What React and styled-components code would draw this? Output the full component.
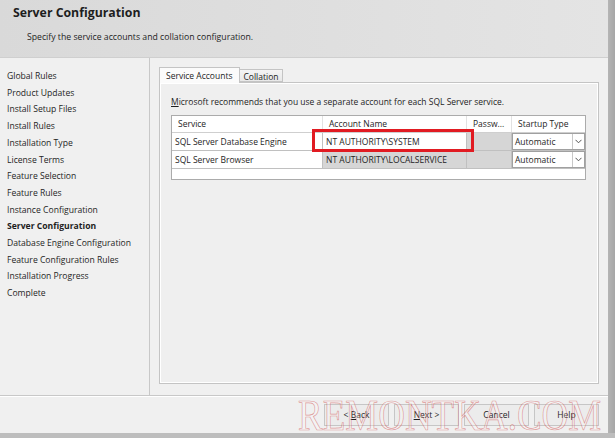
import * as React from 'react'
import styled, { createGlobalStyle } from 'styled-components'

const steps = [
  'Global Rules',
  'Product Updates',
  'Install Setup Files',
  'Install Rules',
  'Installation Type',
  'License Terms',
  'Feature Selection',
  'Feature Rules',
  'Instance Configuration',
  'Server Configuration',
  'Database Engine Configuration',
  'Feature Configuration Rules',
  'Installation Progress',
  'Complete',
]

const services = [
  { name: 'SQL Server Database Engine', account: 'NT AUTHORITY\\SYSTEM', editable: true, startup: 'Automatic' },
  { name: 'SQL Server Browser', account: 'NT AUTHORITY\\LOCALSERVICE', editable: false, startup: 'Automatic' },
]

const buttons = [
  { label: '< ', key: 'B', rest: 'ack' },
  { label: '', key: 'N', rest: 'ext >' },
  { label: 'Cancel' },
  { label: 'Help' },
]

export default function App() {
  return (
    <>
      <GlobalStyle />
      <Window>
        <Main>
          <Header>
            <Title>Server Configuration</Title>
            <Subtitle>Specify the service accounts and collation configuration.</Subtitle>
          </Header>
          <Body>
            <Nav>
              {steps.map((s) => (
                <NavItem key={s} $active={s === 'Server Configuration'}>
                  {s}
                </NavItem>
              ))}
            </Nav>
            <Content>
              <TabStrip>
                <Tab $selected>Service Accounts</Tab>
                <Tab>Collation</Tab>
              </TabStrip>
              <TabPage>
                <Hint>
                  <u>M</u>icrosoft recommends that you use a separate account for each SQL Server service.
                </Hint>
                <GridWrap>
                  <Grid>
                    <HeadRow>
                      <HeadCell>Service</HeadCell>
                      <HeadCell>Account Name</HeadCell>
                      <HeadCell>Passw...</HeadCell>
                      <HeadCell $last>Startup Type</HeadCell>
                    </HeadRow>
                    {services.map((row) => (
                      <Row key={row.name}>
                        <Cell>{row.name}</Cell>
                        <Cell $grey={!row.editable}>{row.account}</Cell>
                        <Cell $grey />
                        <Combo>
                          <ComboText>{row.startup}</ComboText>
                          <ComboArrow>
                            <svg width="7" height="5" viewBox="0 0 7 5">
                              <path d="M0.5 0.8 L3.5 3.8 L6.5 0.8" fill="none" stroke="#555" strokeWidth="1" />
                            </svg>
                          </ComboArrow>
                        </Combo>
                      </Row>
                    ))}
                    <Filler />
                  </Grid>
                  <Highlight />
                </GridWrap>
              </TabPage>
            </Content>
          </Body>
          <Footer>
            {buttons.map((b) => (
              <Button key={b.label + (b.key || '')}>
                {b.label}
                {b.key && <u>{b.key}</u>}
                {b.rest}
              </Button>
            ))}
          </Footer>
        </Main>
        <EdgeRight />
        <Watermark>REMONTKA.COM</Watermark>
      </Window>
      <EdgeBottom />
    </>
  )
}

const GlobalStyle = createGlobalStyle`
  html, body {
    margin: 0;
    padding: 0;
    background: #f0f0f0;
  }
  body {
    font-family: "Open Sans", "Noto Sans", sans-serif;
    color: #1e1e1e;
  }
`

const Window = styled.div`
  position: relative;
  width: 615px;
  height: 433px;
  display: flex;
  overflow: hidden;
  background: #f0f0f0;
`

const Main = styled.div`
  width: 608px;
  display: flex;
  flex-direction: column;
`

const EdgeRight = styled.div`
  width: 7px;
  background: linear-gradient(to right, #b4b4b4, #a6a6a6);
`

const EdgeBottom = styled.div`
  width: 615px;
  height: 5px;
  background: #bdbdbd;
`

const Header = styled.div`
  height: 58px;
  box-sizing: border-box;
  padding: 4px 0 0 13px;
  background: linear-gradient(to right, #d9d9d9, #e4e4e4);
  border-bottom: 1px solid #cfcfcf;
`

const Title = styled.div`
  font-size: 12.3px;
  font-weight: 700;
  line-height: 18px;
`

const Subtitle = styled.div`
  margin: 9px 0 0 14px;
  font-size: 8.7px;
  line-height: 12px;
`

const Body = styled.div`
  display: flex;
  height: 337px;
  border-bottom: 1px solid #c8c8c8;
`

const Nav = styled.div`
  width: 150px;
  box-sizing: border-box;
  padding: 10px 0 0 7px;
  border-right: 1px solid #c8c8c8;
`

const NavItem = styled.div`
  font-size: 8.6px;
  line-height: 16.7px;
  font-weight: ${(p) => (p.$active ? 700 : 400)};
  white-space: nowrap;
`

const Content = styled.div`
  flex: 1;
  display: flex;
  flex-direction: column;
  padding: 10px 9px 11px 9px;
`

const TabStrip = styled.div`
  display: flex;
  align-items: flex-end;
  height: 15px;
  margin-bottom: -1px;
  position: relative;
  z-index: 1;
`

const Tab = styled.div`
  box-sizing: border-box;
  height: ${(p) => (p.$selected ? '16px' : '13px')};
  padding: 0 ${(p) => (p.$selected ? '6px' : '4px')};
  margin-bottom: ${(p) => (p.$selected ? '0' : '1px')};
  font-size: 8.5px;
  line-height: ${(p) => (p.$selected ? '15px' : '13px')};
  border: 1px solid #c4c4c4;
  border-bottom: ${(p) => (p.$selected ? 'none' : '1px solid #c4c4c4')};
  border-left: ${(p) => (p.$selected ? '1px solid #c4c4c4' : 'none')};
  background: ${(p) => (p.$selected ? '#fbfbfb' : 'linear-gradient(#f4f4f4, #e8e8e8)')};
`

const TabPage = styled.div`
  flex: 1;
  border: 1px solid #c4c4c4;
  box-shadow: inset 1px 1px 0 #ffffff, inset -1px -1px 0 #ffffff;
  background: #efefef;
  padding: 13px 10px 0 11px;
`

const Hint = styled.div`
  font-size: 8.5px;
  line-height: 12px;
  white-space: nowrap;
`

const GridWrap = styled.div`
  position: relative;
  margin-top: 7px;
  width: 415px;
`

const Grid = styled.div`
  box-sizing: border-box;
  width: 415px;
  border: 1px solid #ababab;
  background: #ffffff;
`

const columns = '151px 144px 45px 1fr'

const HeadRow = styled.div`
  display: grid;
  grid-template-columns: ${columns};
  height: 16px;
  border-bottom: 1px solid #cfcfcf;
`

const HeadCell = styled.div`
  font-size: 8.5px;
  line-height: 16px;
  padding-left: 6px;
  border-right: ${(p) => (p.$last ? 'none' : '1px solid #e2e2e2')};
  white-space: nowrap;
  overflow: hidden;
`

const Row = styled.div`
  display: grid;
  grid-template-columns: ${columns};
  height: 17px;
  border-bottom: 1px solid #c0c0c0;
`

const Cell = styled.div`
  font-size: 8.5px;
  line-height: 17px;
  padding-left: 3px;
  border-right: 1px solid #c0c0c0;
  background: ${(p) => (p.$grey ? '#d6d6d6' : '#ffffff')};
  white-space: nowrap;
  overflow: hidden;
`

const Combo = styled.div`
  display: flex;
  box-sizing: border-box;
  border: 1px solid #a0a0a0;
  background: #ffffff;
`

const ComboText = styled.div`
  flex: 1;
  font-size: 8.5px;
  line-height: 15px;
  padding-left: 2px;
  border-right: 1px solid #c8c8c8;
`

const ComboArrow = styled.div`
  width: 11px;
  display: flex;
  align-items: center;
  justify-content: center;
`

const Filler = styled.div`
  height: 10px;
`

const Highlight = styled.div`
  position: absolute;
  left: 141px;
  top: 14px;
  width: 162px;
  height: 23px;
  box-sizing: border-box;
  border: 3px solid #e11b22;
`

const Footer = styled.div`
  flex: 1;
  display: flex;
  justify-content: flex-end;
  align-items: flex-start;
  gap: 5px;
  padding: 7px 9px 0 0;
  border-top: 1px solid #ffffff;
`

const Button = styled.div`
  width: 65px;
  height: 22px;
  box-sizing: border-box;
  border: 1px solid #c6c6c6;
  background: #ececec;
  font-size: 8.5px;
  line-height: 20px;
  text-align: center;
`

const Watermark = styled.div`
  position: absolute;
  left: 298px;
  top: 398px;
  font-family: "Liberation Serif", serif;
  font-size: 37px;
  line-height: 29px;
  color: rgba(255, 255, 255, 0.25);
  -webkit-text-stroke: 0.6px rgba(205, 70, 70, 0.55);
  transform: scaleY(1.2);
  transform-origin: top left;
  white-space: nowrap;
  pointer-events: none;
`
